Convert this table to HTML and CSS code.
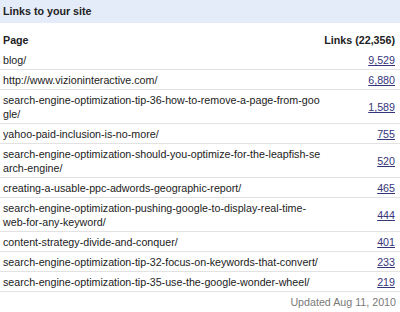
FILE: index.html
```html
<!DOCTYPE html>
<html lang="en">
<head>
    <meta charset="UTF-8">
    <title>Links to your site</title>
    <link rel="stylesheet" href="styles.css">
</head>
<body>

<div class="box-title">Links to your site</div>

<table class="links-table">
    <colgroup>
        <col class="col-page">
        <col class="col-count">
    </colgroup>
    <thead>
        <tr>
            <th>Page</th>
            <th class="count">Links (22,356)</th>
        </tr>
    </thead>
    <tbody>
        <tr><td class="page">blog/</td><td class="count"><a href="#">9,529</a></td></tr>
        <tr><td class="page">http://www.vizioninteractive.com/</td><td class="count"><a href="#">6,880</a></td></tr>
        <tr><td class="page">search-engine-optimization-tip-36-how-to-remove-a-page-from-google/</td><td class="count"><a href="#">1,589</a></td></tr>
        <tr><td class="page">yahoo-paid-inclusion-is-no-more/</td><td class="count"><a href="#">755</a></td></tr>
        <tr><td class="page">search-engine-optimization-should-you-optimize-for-the-leapfish-search-engine/</td><td class="count"><a href="#">520</a></td></tr>
        <tr><td class="page">creating-a-usable-ppc-adwords-geographic-report/</td><td class="count"><a href="#">465</a></td></tr>
        <tr><td class="page">search-engine-optimization-pushing-google-to-display-real-time-<br>web-for-any-keyword/</td><td class="count"><a href="#">444</a></td></tr>
        <tr><td class="page">content-strategy-divide-and-conquer/</td><td class="count"><a href="#">401</a></td></tr>
        <tr><td class="page">search-engine-optimization-tip-32-focus-on-keywords-that-convert/</td><td class="count"><a href="#">233</a></td></tr>
        <tr><td class="page">search-engine-optimization-tip-35-use-the-google-wonder-wheel/</td><td class="count"><a href="#">219</a></td></tr>
    </tbody>
</table>

<div class="updated">Updated Aug 11, 2010</div>

</body>
</html>
```

FILE: styles.css
```css
* {
    box-sizing: border-box;
    margin: 0;
    padding: 0;
}

body {
    font-family: "Liberation Sans", Arial, sans-serif;
    font-size: 10.7px;
    color: #222222;
    background-color: #ffffff;
}

.box-title {
    background-color: #e5ecf9;
    height: 23px;
    line-height: 23px;
    padding: 0 3px;
    font-weight: bold;
}

.links-table {
    width: 400px;
    table-layout: fixed;
    border-collapse: collapse;
    margin-top: 7px;
}

.col-page {
    width: 323px;
}

.col-count {
    width: 77px;
}

.links-table th {
    text-align: left;
    font-weight: bold;
    line-height: 14px;
    padding: 3px 3px;
    white-space: nowrap;
}

.links-table td {
    line-height: 14px;
    padding: 3px 3px 2px;
    border-bottom: 1px solid #e2e2e2;
    vertical-align: middle;
}

.links-table td.page {
    word-break: break-all;
    padding-right: 1px;
}

.links-table .count {
    text-align: right;
    padding-left: 0;
    padding-right: 5px;
}

.links-table a {
    color: #35357a;
    text-decoration: underline;
}

.updated {
    text-align: right;
    color: #7a7a7a;
    line-height: 21px;
    padding-right: 4px;
}
```
